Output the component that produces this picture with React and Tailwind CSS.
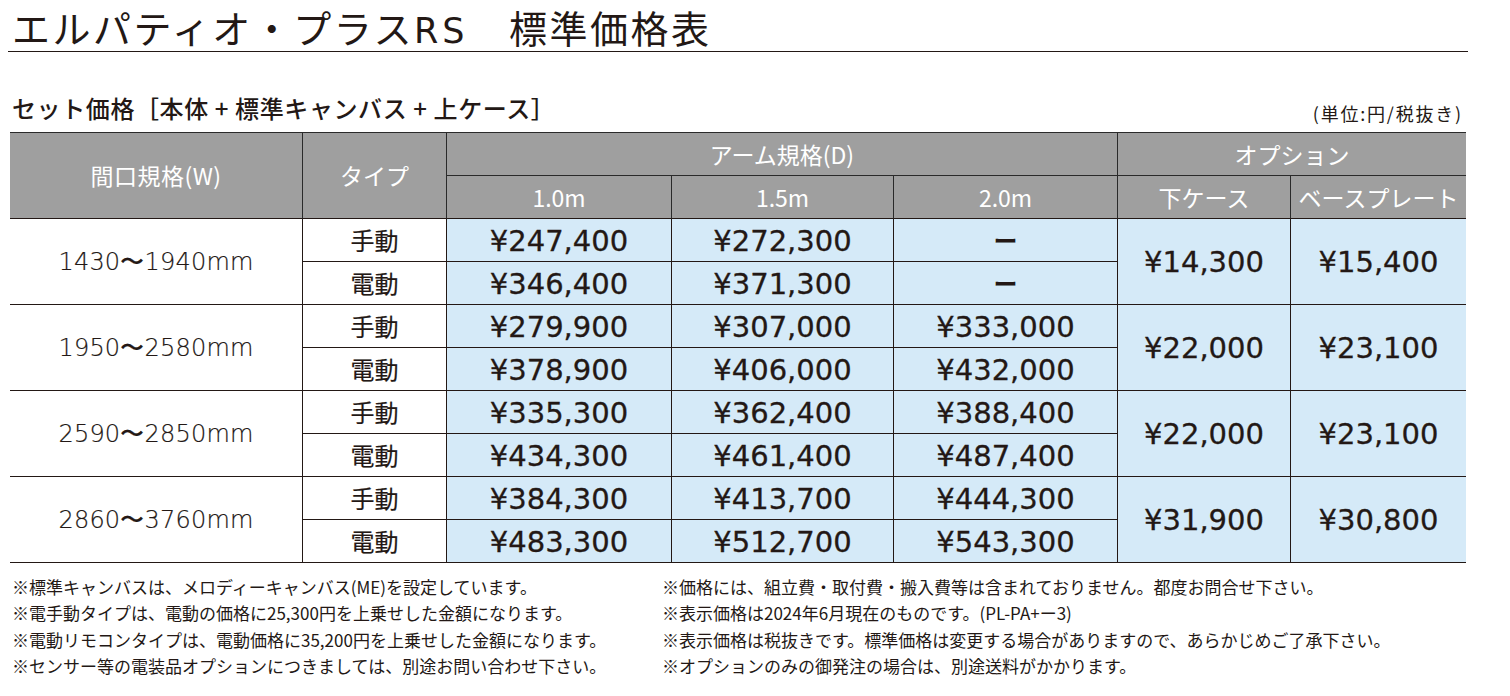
import React from "react";

const JP = { fontFamily: '"Noto Sans CJK JP", "Noto Sans", sans-serif' };

const groups = [
  {
    w: "1430〜1940mm",
    rows: [
      ["¥247,400", "¥272,300", "ー"],
      ["¥346,400", "¥371,300", "ー"],
    ],
    opt: ["¥14,300", "¥15,400"],
  },
  {
    w: "1950〜2580mm",
    rows: [
      ["¥279,900", "¥307,000", "¥333,000"],
      ["¥378,900", "¥406,000", "¥432,000"],
    ],
    opt: ["¥22,000", "¥23,100"],
  },
  {
    w: "2590〜2850mm",
    rows: [
      ["¥335,300", "¥362,400", "¥388,400"],
      ["¥434,300", "¥461,400", "¥487,400"],
    ],
    opt: ["¥22,000", "¥23,100"],
  },
  {
    w: "2860〜3760mm",
    rows: [
      ["¥384,300", "¥413,700", "¥444,300"],
      ["¥483,300", "¥512,700", "¥543,300"],
    ],
    opt: ["¥31,900", "¥30,800"],
  },
];

const types = ["手動", "電動"];

const hd =
  "flex items-center justify-center bg-[#9f9f9f] text-white text-[23px] border-[#2a2a2a]";
const bodyCell = "flex items-center justify-center border-[#231815]";
const price =
  "pt-[3px] text-[29px] font-['DejaVu_Sans',sans-serif] [-webkit-text-stroke:0.3px_#231815]";

function Price({ v }) {
  if (v === "ー") {
    return (
      <span className="text-[24px] font-bold font-['Noto_Sans_CJK_JP',sans-serif]">
        ー
      </span>
    );
  }
  return <span className={price}>{v}</span>;
}

export default function App() {
  const leftNotes = [
    "※標準キャンバスは、メロディーキャンバス(ME)を設定しています。",
    "※電手動タイプは、電動の価格に25,300円を上乗せした金額になります。",
    "※電動リモコンタイプは、電動価格に35,200円を上乗せした金額になります。",
    "※センサー等の電装品オプションにつきましては、別途お問い合わせ下さい。",
  ];
  const rightNotes = [
    "※価格には、組立費・取付費・搬入費等は含まれておりません。都度お問合せ下さい。",
    "※表示価格は2024年6月現在のものです。(PL-PA+ー3)",
    "※表示価格は税抜きです。標準価格は変更する場合がありますので、あらかじめご了承下さい。",
    "※オプションのみの御発注の場合は、別途送料がかかります。",
  ];

  return (
    <div
      className="w-[1510px] h-[696px] bg-white text-[#231815] overflow-hidden"
      style={JP}
    >
      {/* Title */}
      <div className="mx-[8px] w-[1460px] h-[52px] border-b border-[#231815] pt-[4px]">
        <h1 className="pl-[4px] h-[46px] text-[38px] leading-[46px] font-normal tracking-[2.5px] whitespace-nowrap">
          エルパティオ・プラス
          <span className="font-['DejaVu_Sans',sans-serif] text-[35px] leading-[46px] tracking-[4px]">
            RS
          </span>
          {"\u3000"}標準価格表
        </h1>
      </div>

      {/* Subtitle row */}
      <div className="mt-[37px] ml-[12px] w-[1451px] h-[38px] flex items-end justify-between">
        <div className="text-[24px] leading-[38px] font-medium tracking-[0.6px] whitespace-nowrap">
          セット価格［本体 + 標準キャンバス + 上ケース］
        </div>
        <div className="text-[18px] leading-[28px] tracking-[1.8px] whitespace-nowrap">
          (単位:円/税抜き)
        </div>
      </div>

      {/* Table */}
      <div className="mt-[5px] ml-[10px] w-[1456px] border-t border-[#2a2a2a] grid grid-cols-[293px_144px_225px_222px_224px_173px_175px] grid-rows-[43px_43px_repeat(8,43px)]">
        <div className={`${hd} row-span-2 border-r border-b border-b-[#231815] tracking-[0.5px]`}>
          間口規格(W)
        </div>
        <div className={`${hd} row-span-2 border-r border-b border-b-[#231815]`}>
          タイプ
        </div>
        <div className={`${hd} col-span-3 border-r border-b`}>アーム規格(D)</div>
        <div className={`${hd} col-span-2 border-b`}>オプション</div>
        <div className={`${hd} border-r border-b border-b-[#231815]`}>1.0m</div>
        <div className={`${hd} border-r border-b border-b-[#231815]`}>1.5m</div>
        <div className={`${hd} border-r border-b border-b-[#231815]`}>2.0m</div>
        <div className={`${hd} border-r border-b border-b-[#231815]`}>下ケース</div>
        <div className={`${hd} border-b border-b-[#231815]`}>ベースプレート</div>

        {groups.map((g, gi) => (
          <React.Fragment key={gi}>
            <div
              className={`${bodyCell} row-span-2 border-r border-b bg-white font-['DejaVu_Sans',sans-serif] text-[24px] font-light tracking-[0.2px] [-webkit-text-stroke:0.2px_#231815]`}
            >
              {g.w}
            </div>
            {g.rows.map((r, ri) => (
              <React.Fragment key={ri}>
                <div
                  className={`${bodyCell} border-r border-b bg-white text-[24px] font-normal [-webkit-text-stroke:0.2px_#231815]`}
                >
                  {types[ri]}
                </div>
                {r.map((v, vi) => (
                  <div
                    key={vi}
                    className={`${bodyCell} border-r border-b bg-[#d5eaf8]`}
                  >
                    <Price v={v} />
                  </div>
                ))}
                {ri === 0 && (
                  <>
                    <div
                      className={`${bodyCell} row-span-2 border-r border-b bg-[#d5eaf8]`}
                    >
                      <Price v={g.opt[0]} />
                    </div>
                    <div
                      className={`${bodyCell} row-span-2 border-b bg-[#d5eaf8]`}
                    >
                      <Price v={g.opt[1]} />
                    </div>
                  </>
                )}
              </React.Fragment>
            ))}
          </React.Fragment>
        ))}
      </div>

      {/* Notes */}
      <div className="mt-[11px] flex text-[17px] leading-[26.4px]">
        <div className="w-[662px] pl-[12px] flex flex-col">
          {leftNotes.map((n, i) => (
            <div key={i} className="whitespace-nowrap">
              {n}
            </div>
          ))}
        </div>
        <div className="flex flex-col">
          {rightNotes.map((n, i) => (
            <div key={i} className="whitespace-nowrap">
              {n}
            </div>
          ))}
        </div>
      </div>
    </div>
  );
}
